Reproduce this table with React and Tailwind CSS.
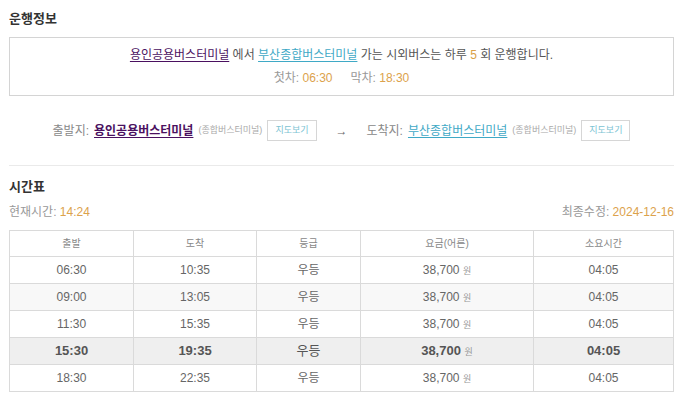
import React from 'react'

const rows = [
  { dep: '06:30', arr: '10:35', grade: '우등', fare: '38,700', dur: '04:05', bg: 'bg-white' },
  { dep: '09:00', arr: '13:05', grade: '우등', fare: '38,700', dur: '04:05', bg: 'bg-[#f8f8f8]' },
  { dep: '11:30', arr: '15:35', grade: '우등', fare: '38,700', dur: '04:05', bg: 'bg-white' },
  { dep: '15:30', arr: '19:35', grade: '우등', fare: '38,700', dur: '04:05', bg: 'bg-[#efefef]', now: true },
  { dep: '18:30', arr: '22:35', grade: '우등', fare: '38,700', dur: '04:05', bg: 'bg-white' },
]

const cols = ['w-[124px]', 'w-[123px]', 'w-[104px]', 'w-[173px]', 'w-[140px]']

function MapButton() {
  return (
    <span className="inline-flex items-center justify-center h-[21px] px-[7px] border border-[#d6d6d6] text-[9px] text-[#7cc3d3] bg-white">
      지도보기
    </span>
  )
}

export default function App() {
  return (
    <div className="w-[683px] h-[405px] bg-white px-[9px] text-[#555] overflow-hidden" style={{ fontFamily: '"Liberation Sans", "Noto Sans CJK KR", sans-serif' }}>
      {/* 운행정보 */}
      <h2 className="pt-[10px] h-[37px] text-[13px] font-bold text-[#333] leading-[18px]">운행정보</h2>
      <div className="h-[59px] border border-[#d4d4d4] flex flex-col items-center pt-[8px] text-[12px]">
        <p className="leading-[18px]">
          <a className="text-[#4a1060] underline underline-offset-2">용인공용버스터미널</a> 에서{' '}
          <a className="text-[#3fa9c6] underline underline-offset-2">부산종합버스터미널</a> 가는 시외버스는 하루{' '}
          <span className="text-[#d9a048]">5</span> 회 운행합니다.
        </p>
        <p className="mt-[5px] leading-[18px] text-[#999]">
          첫차: <span className="text-[#dca24c]">06:30</span>
          <span className="ml-[18px]">막차: </span><span className="text-[#dca24c]">18:30</span>
        </p>
      </div>

      {/* 출발지 / 도착지 */}
      <div className="h-[70px] flex items-center justify-center border-b border-[#eaeaea] text-[12px] text-[#888]">
        <div className="flex items-center gap-[5px]">
          <span>출발지:</span>
          <a className="text-[#4a1060] underline underline-offset-2 font-bold">용인공용버스터미널</a>
          <span className="text-[9px] text-[#aaa]">(종합버스터미널)</span>
          <MapButton />
          <span className="mx-[14px] text-[#666]">→</span>
          <span>도착지:</span>
          <a className="text-[#3fa9c6] underline underline-offset-2">부산종합버스터미널</a>
          <span className="text-[9px] text-[#aaa]">(종합버스터미널)</span>
          <MapButton />
        </div>
      </div>

      {/* 시간표 */}
      <h2 className="pt-[12px] h-[38px] text-[13px] font-bold text-[#333] leading-[18px]">시간표</h2>
      <div className="flex justify-between text-[12px] text-[#999] leading-[16px]">
        <span>현재시간: <span className="text-[#dca24c]">14:24</span></span>
        <span>최종수정: <span className="text-[#dca24c]">2024-12-16</span></span>
      </div>

      <table className="mt-[10px] w-[664px] border-collapse border border-[#dadada] text-[12px] text-[#666] table-fixed">
        <thead>
          <tr className="h-[26px] text-[10px] text-[#888]">
            {['출발', '도착', '등급', '요금(어른)', '소요시간'].map((h, i) => (
              <th key={h} className={`${cols[i]} font-normal border border-[#dadada]`}>{h}</th>
            ))}
          </tr>
        </thead>
        <tbody>
          {rows.map((r) => (
            <tr key={r.dep} className={`h-[27px] ${r.bg} ${r.now ? 'font-bold text-[#555] text-[13px]' : ''}`}>
              <td className="text-center border border-[#dadada]">{r.dep}</td>
              <td className="text-center border border-[#dadada]">{r.arr}</td>
              <td className="text-center border border-[#dadada] font-normal">{r.grade}</td>
              <td className="text-center border border-[#dadada]">
                {r.fare} <span className="text-[9px] font-normal text-[#999]">원</span>
              </td>
              <td className="text-center border border-[#dadada]">{r.dur}</td>
            </tr>
          ))}
        </tbody>
      </table>
    </div>
  )
}
